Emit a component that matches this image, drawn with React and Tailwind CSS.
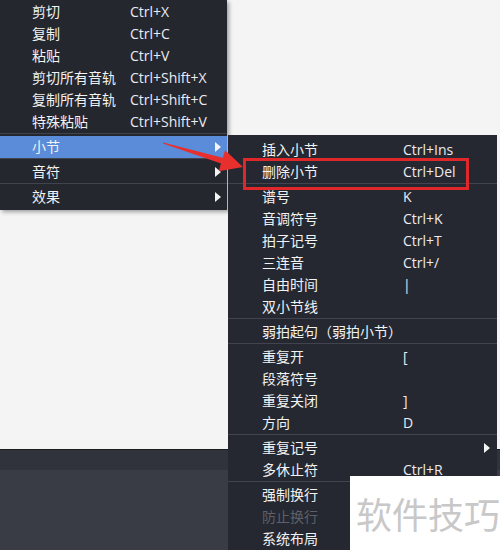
const mainItems = [
  { label: '剪切', key: 'Ctrl+X' },
  { label: '复制', key: 'Ctrl+C' },
  { label: '粘贴', key: 'Ctrl+V' },
  { label: '剪切所有音轨', key: 'Ctrl+Shift+X' },
  { label: '复制所有音轨', key: 'Ctrl+Shift+C' },
  { label: '特殊粘贴', key: 'Ctrl+Shift+V' },
  { sep: true },
  { label: '小节', sub: true, active: true },
  { sep: true },
  { label: '音符', sub: true },
  { sep: true },
  { label: '效果', sub: true },
];

const subItems = [
  { label: '插入小节', key: 'Ctrl+Ins' },
  { label: '删除小节', key: 'Ctrl+Del' },
  { sep: true },
  { label: '谱号', key: 'K' },
  { label: '音调符号', key: 'Ctrl+K' },
  { label: '拍子记号', key: 'Ctrl+T' },
  { label: '三连音', key: 'Ctrl+/' },
  { label: '自由时间', key: '|' },
  { label: '双小节线' },
  { sep: true },
  { label: '弱拍起句（弱拍小节）' },
  { sep: true },
  { label: '重复开', key: '[' },
  { label: '段落符号' },
  { label: '重复关闭', key: ']' },
  { label: '方向', key: 'D' },
  { sep: true },
  { label: '重复记号', sub: true },
  { label: '多休止符', key: 'Ctrl+R' },
  { sep: true },
  { label: '强制换行' },
  { label: '防止换行', disabled: true },
  { label: '系统布局' },
];

const font = { fontFamily: '"Open Sans", "Noto Sans CJK SC", sans-serif' };

function Caret() {
  return (
    <svg width="6" height="10" viewBox="0 0 6 10" className="shrink-0">
      <path d="M0 0 L6 5 L0 10 Z" fill="#f4f4f4" />
    </svg>
  );
}

function MenuList({ items, labelWidth, padLeft, caretRight }) {
  return items.map((it, i) =>
    it.sep ? (
      <div key={i} className="h-[3px]">
        <div className="h-px bg-[#41444e]" />
      </div>
    ) : (
      <div
        key={i}
        className={`h-[22px] pb-px flex items-center text-[14px] ${it.active ? 'bg-[#5a8cd9]' : ''} ${
          it.disabled ? 'text-[#5d606a]' : 'text-[#f2f2f2]'
        }`}
        style={{ paddingLeft: padLeft }}
      >
        <span className="shrink-0" style={{ width: labelWidth }}>
          {it.label}
        </span>
        {it.key && <span className="text-[#ecebf2]">{it.key}</span>}
        {it.sub && (
          <span className="ml-auto flex" style={{ marginRight: caretRight }}>
            <Caret />
          </span>
        )}
      </div>
    )
  );
}

export default function App() {
  return (
    <div className="relative w-[500px] h-[550px] overflow-hidden flex flex-col" style={font}>
      <div className="h-[449px] bg-[#f4f4f4]" />
      <div className="h-px bg-[#1b1d21]" />
      <div className="h-[20px] bg-[#30333b]" />
      <div className="flex-1 bg-[#393c45]" />

      {/* main context menu */}
      <div className="absolute left-0 top-0 w-[227px] pt-px pb-[2px] bg-[#24272e] shadow-[2px_2px_4px_rgba(0,0,0,0.35)]">
        <MenuList items={mainItems} labelWidth={98} padLeft={32} caretRight={6} />
      </div>

      {/* 小节 submenu */}
      <div className="absolute left-[228px] top-[135px] w-[269px] h-[420px] pt-[4px] bg-[#252830]">
        <MenuList items={subItems} labelWidth={141} padLeft={34} caretRight={7} />
      </div>

      {/* annotation arrow */}
      <svg className="absolute left-0 top-0" width="500" height="550" viewBox="0 0 500 550">
        <polygon
          points="163,142.5 222.8,157.8 225.1,150.2 243,167 218.7,171.2 221,163.6 163,143.5"
          fill="#e7302d"
        />
      </svg>

      {/* highlight box */}
      <div className="absolute left-[243px] top-[158px] w-[226px] h-[32px] border-[3px] border-[#e0282b]" />

      {/* watermark */}
      <div className="absolute left-[350px] top-[476px] w-[150px] h-[74px] bg-white flex items-center pl-[6px]">
        <span
          className="text-[36px] leading-none text-[#c8c8c8]"
          style={{ fontFamily: '"Noto Sans CJK SC", sans-serif' }}
        >
          软件技巧
        </span>
      </div>
    </div>
  );
}
